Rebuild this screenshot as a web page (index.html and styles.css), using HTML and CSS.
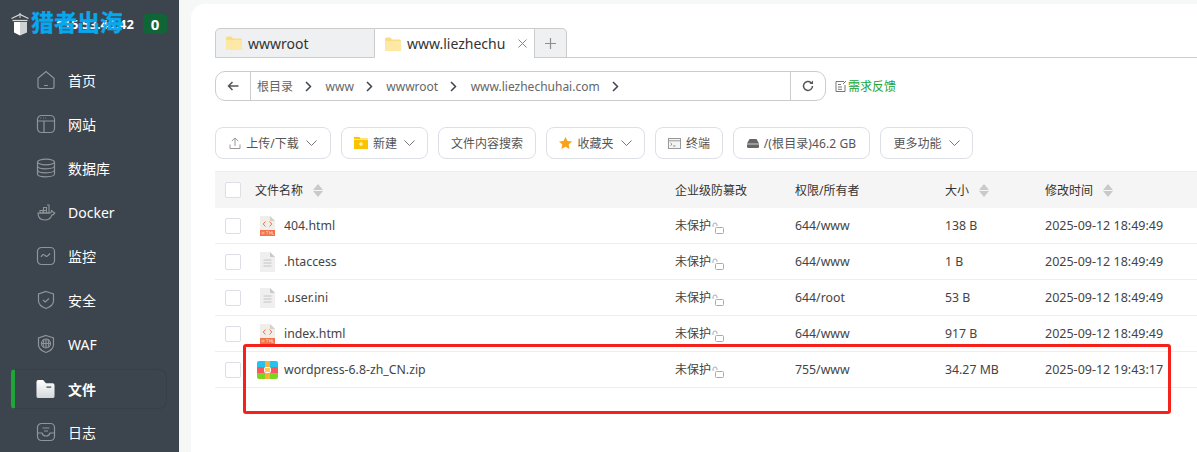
FILE: index.html
```html
<!DOCTYPE html>
<html>
<head lang="zh-CN">
    <meta charset="UTF-8">
    <title>文件管理</title>
    <link rel="stylesheet" href="styles.css">
</head>
<body>
<div class="page">
    <!-- 左侧菜单 -->
    <div class="side">
        <div class="brand">
            <span class="ip">115.53.46.42</span>
            <span class="badge">0</span>
            <span class="mark">
                <svg width="18" height="23" viewBox="0 0 18 23"><path d="M.5 5.500 9 1.500l8.500 4" fill="none" stroke="#d8d8d8" stroke-width="1.300"/><path d="M1.500 7.500h15" stroke="#d8d8d8" stroke-width="1.300"/><path d="M9 0v5" stroke="#d8d8d8"/><path d="M3 9h6v13.500L3 19.500z" fill="#fff"/><path d="M9 9h7v10.500l-7 3z" fill="#cfd2d4"/></svg>
                <span class="mark-text">猎者出海</span>
            </span>
        </div>
        <div class="menu">
            <div class="menu-item"><svg class="ico" viewBox="0 0 20 20"><path d="M2 8.200 10 1.500l8 6.700v8.300a2 2 0 0 1-2 2H4a2 2 0 0 1-2-2zM8 15.500h4"/></svg>首页</div>
            <div class="menu-item"><svg class="ico" viewBox="0 0 20 20"><rect x="1.500" y="1.500" width="17" height="17" rx="4"/><path d="M1.500 7h17M8 7v11.500M4.500 4.200h.6M7 4.200h.6M9.500 4.200h.6"/></svg>网站</div>
            <div class="menu-item"><svg class="ico" viewBox="0 0 20 20"><ellipse cx="10" cy="4" rx="8.500" ry="2.800"/><path d="M1.500 4v12c0 1.600 3.800 2.800 8.500 2.800s8.500-1.200 8.500-2.800V4M1.500 8c0 1.600 3.800 2.800 8.500 2.800s8.500-1.200 8.500-2.800M1.500 12c0 1.600 3.800 2.800 8.500 2.800s8.500-1.200 8.500-2.800"/></svg>数据库</div>
            <div class="menu-item"><svg class="ico" viewBox="0 0 20 20"><path d="M1.500 11h12.500c1 0 1.500-2 1.500-2.500 1 .2 1.500 1 1.800 2 .5 0 1 0 1.500.3-.8 2-2 2.200-3 2.300-1 3-3.500 4.900-7 4.900-4.300 0-6.800-2.500-6.800-7z"/><path d="M4 8.500h3v2.500H4zM7.500 8.500h3v2.500h-3zM7.500 5.500h3v3h-3zM11 3h2v8h-2" stroke-width="1.100"/></svg>Docker</div>
            <div class="menu-item"><svg class="ico" viewBox="0 0 20 20"><rect x="1.500" y="1.500" width="17" height="17" rx="4"/><path d="M5 11c1.500-3 2.500-3 4-1.500s2.500 1 5-2"/></svg>监控</div>
            <div class="menu-item"><svg class="ico" viewBox="0 0 20 20"><path d="M10 1.500 17.500 4v7c0 3.500-3.500 6-7.500 7.500C6 17 2.500 14.500 2.500 11V4z"/><path d="M7 10l2.200 2L13 8.500"/></svg>安全</div>
            <div class="menu-item"><svg class="ico" viewBox="0 0 20 20"><path d="M10 1.500 17.500 4v7c0 3.500-3.500 6-7.500 7.500C6 17 2.500 14.500 2.500 11V4z"/><circle cx="10" cy="9.500" r="4.500"/><path d="M5.500 9.500h9M10 5v9M8 5.500c-1 2.500-1 5.500 0 8M12 5.500c1 2.500 1 5.500 0 8"/></svg>WAF</div>
            <div class="menu-item active"><svg class="ico-solid" width="19" height="19" viewBox="0 0 20 20"><defs><linearGradient id="fold" x1="0" y1="0" x2="0" y2="1"><stop offset="0" stop-color="#fff"/><stop offset="1" stop-color="#d5d7d9"/></linearGradient></defs><path d="M2.500 0h5l3 3.500h7a2 2 0 0 1 2 2V17a2 2 0 0 1-2 2h-15a2 2 0 0 1-2-2V2a2 2 0 0 1 2-2z" fill="url(#fold)"/><path d="M11 7.500h5" stroke="#555b62" stroke-width="1.500"/></svg>文件</div>
            <div class="menu-item"><svg class="ico" viewBox="0 0 20 20"><rect x="1.500" y="1.500" width="17" height="17" rx="4"/><path d="M1.500 11H6c.5 2 2 3 4 3s3.500-1 4-3h4.500M6.500 6h7M8 9h4"/></svg>日志</div>
        </div>
    </div>
    <!-- 右侧内容 -->
    <div class="main">
        <div class="panel">
            <div class="tabs">
                <div class="tab">
                    <svg class="folder" viewBox="0 0 16 14"><path d="M0 2a1.500 1.500 0 0 1 1.500-1.500h4L7 2.500h7.500A1.500 1.500 0 0 1 16 4v8.500a1.500 1.500 0 0 1-1.500 1.500h-13A1.500 1.500 0 0 1 0 12.500z" fill="#fbdc84"/><path d="M0 4h16v8.500a1.500 1.500 0 0 1-1.500 1.500h-13A1.500 1.500 0 0 1 0 12.500z" fill="#fee8a6"/></svg>
                    wwwroot
                </div>
                <div class="tab on">
                    <svg class="folder" viewBox="0 0 16 14"><path d="M0 2a1.500 1.500 0 0 1 1.500-1.500h4L7 2.500h7.500A1.500 1.500 0 0 1 16 4v8.500a1.500 1.500 0 0 1-1.500 1.500h-13A1.500 1.500 0 0 1 0 12.500z" fill="#fbdc84"/><path d="M0 4h16v8.500a1.500 1.500 0 0 1-1.500 1.500h-13A1.500 1.500 0 0 1 0 12.500z" fill="#fee8a6"/></svg>
                    <span class="tab-name">www.liezhechu</span>
                    <svg class="tab-x" width="9" height="9" viewBox="0 0 9 9"><path d="M.5.500l8 8M8.500.500l-8 8" stroke="#888" fill="none"/></svg>
                </div>
                <div class="tab-add"><svg width="13" height="13" viewBox="0 0 13 13"><path d="M6.500 1v11M1 6.500h11" stroke="#8a8f94" stroke-width="1.200"/></svg></div>
                <div class="tab-rest"></div>
            </div>
            <div class="path-row">
                <div class="path">
                    <div class="path-back"><svg width="12" height="10" viewBox="0 0 12 10"><path d="M11.500 5H1.500M5.500 1 1.500 5l4 4" fill="none" stroke="#555" stroke-width="1.500"/></svg></div>
                    <div class="crumbs">
                        <span>根目录</span><svg class="sep" viewBox="0 0 7 11"><path d="M1 1l4.500 4.500L1 10"/></svg>
                        <span>www</span><svg class="sep" viewBox="0 0 7 11"><path d="M1 1l4.500 4.500L1 10"/></svg>
                        <span>wwwroot</span><svg class="sep" viewBox="0 0 7 11"><path d="M1 1l4.500 4.500L1 10"/></svg>
                        <span>www.liezhechuhai.com</span><svg class="sep" viewBox="0 0 7 11"><path d="M1 1l4.500 4.500L1 10"/></svg>
                    </div>
                    <div class="path-refresh"><svg width="12" height="12" viewBox="0 0 12 12"><path d="M10.500 6A4.500 4.500 0 1 1 9 2.600" fill="none" stroke="#555" stroke-width="1.500"/><path d="M11 .500v3.500H7.500z" fill="#555"/></svg></div>
                </div>
                <div class="feedback"><svg width="12" height="12" viewBox="0 0 12 12"><path d="M9 1.500H1v10h9V5M3 4.500h3M3 7h4M3 9.300h4M8 4l3-3" fill="none" stroke="#777"/></svg>需求反馈</div>
            </div>
            <div class="tools">
                <div class="btn b-upload"><svg width="12" height="12" viewBox="0 0 12 12"><path d="M1 7.500v4h10v-4M6 9V1M2.800 4 6 1l3.200 3" fill="none" stroke="#999"/></svg>上传/下载<svg class="arr" viewBox="0 0 11 6"><path d="M.5.500 5.500 5.500 10.500.500"/></svg></div>
                <div class="btn b-new"><svg width="14" height="12" viewBox="0 0 14 12"><path d="M0 0h5.500l1 1.500H14V12H0z" fill="#fcc400"/><path d="M0 2.500h14" stroke="#fff" stroke-width=".6"/><path d="M7 5v4M5 7h4" stroke="#fff"/></svg>新建<svg class="arr" viewBox="0 0 11 6"><path d="M.5.500 5.500 5.500 10.500.500"/></svg></div>
                <div class="btn b-search">文件内容搜索</div>
                <div class="btn b-fav"><svg width="13" height="12" viewBox="0 0 13 12"><path d="M6.500 0l2 4 4.500.5L9.700 7.600l.9 4.400-4.100-2.200L2.400 12l.9-4.400L0 4.500 4.500 4z" fill="#f8a21c"/></svg>收藏夹<svg class="arr" viewBox="0 0 11 6"><path d="M.5.500 5.500 5.500 10.500.500"/></svg></div>
                <div class="btn b-term"><svg width="13" height="11" viewBox="0 0 13 11"><rect x=".5" y=".5" width="12" height="10" fill="#f4f4f4" stroke="#999"/><path d="M.5 2.800h12" stroke="#999"/><path d="M2.500 5l1.500 1.300L2.500 7.500M5 8h2.500" stroke="#777" fill="none" stroke-width=".8"/></svg>终端</div>
                <div class="btn b-disk"><svg width="12" height="9" viewBox="0 0 12 9"><path d="M2.500 0h7L12 4.500V7.500a1.500 1.500 0 0 1-1.500 1.500h-9A1.500 1.500 0 0 1 0 7.500V4.500z" fill="#666"/><path d="M0 5h12" stroke="#fff" stroke-width=".7"/></svg>/(根目录)46.2 GB</div>
                <div class="btn b-more">更多功能<svg class="arr" viewBox="0 0 11 6"><path d="M.5.500 5.500 5.500 10.500.500"/></svg></div>
            </div>
            <div class="table">
                <div class="row head">
                    <div class="c-check"><span class="box"></span></div>
                    <div class="c-name">文件名称<span class="sort"></span></div>
                    <div class="c-prot">企业级防篡改</div>
                    <div class="c-perm">权限/所有者</div>
                    <div class="c-size">大小<span class="sort"></span></div>
                    <div class="c-time">修改时间<span class="sort"></span></div>
                </div>
                <div class="row">
                    <div class="c-check"><span class="box"></span></div>
                    <div class="c-name">
                        <svg class="file" viewBox="0 0 15 20"><path d="M0 0h10l5 5v15H0z" fill="#f1eee9"/><path d="M10 0l5 5h-5z" fill="#d5d0c9"/><path d="M0 14h15v6H0z" fill="#f0734a"/><path d="M5.500 5.500 3.200 8l2.300 2.500M9.500 5.500 11.800 8l-2.300 2.500" fill="none" stroke="#f0734a"/><path d="M2 15.500v3M2 17h2M4 15.500v3M6 15.500h2.500M7.200 15.500v3M9.500 18.500v-3l1 2 1-2v3M12.500 15.500v3h1.500" stroke="#fde3d8" stroke-width=".5" fill="none"/></svg>
                        <span class="fname">404.html</span>
                    </div>
                    <div class="c-prot"><span class="fname">未保护</span><svg class="lock" viewBox="0 0 12 12"><path d="M1 5V3a2 2 0 0 1 4 0v1"/><rect x="3.500" y="5.500" width="8" height="6" rx="1"/></svg></div>
                    <div class="c-perm">644/www</div>
                    <div class="c-size">138 B</div>
                    <div class="c-time">2025-09-12 18:49:49</div>
                </div>
                <div class="row">
                    <div class="c-check"><span class="box"></span></div>
                    <div class="c-name">
                        <svg class="file" viewBox="0 0 15 20"><path d="M0 0h10l5 5v15H0z" fill="#efefef"/><path d="M10 0l5 5h-5z" fill="#c9c9c9"/><path d="M3.500 8h8M3.500 11h8M3.500 14h8" stroke="#c4c4c4"/></svg>
                        <span class="fname">.htaccess</span>
                    </div>
                    <div class="c-prot"><span class="fname">未保护</span><svg class="lock" viewBox="0 0 12 12"><path d="M1 5V3a2 2 0 0 1 4 0v1"/><rect x="3.500" y="5.500" width="8" height="6" rx="1"/></svg></div>
                    <div class="c-perm">644/www</div>
                    <div class="c-size">1 B</div>
                    <div class="c-time">2025-09-12 18:49:49</div>
                </div>
                <div class="row">
                    <div class="c-check"><span class="box"></span></div>
                    <div class="c-name">
                        <svg class="file" viewBox="0 0 15 20"><path d="M0 0h10l5 5v15H0z" fill="#efefef"/><path d="M10 0l5 5h-5z" fill="#c9c9c9"/><path d="M3.500 8h8M3.500 11h8M3.500 14h8" stroke="#c4c4c4"/></svg>
                        <span class="fname">.user.ini</span>
                    </div>
                    <div class="c-prot"><span class="fname">未保护</span><svg class="lock" viewBox="0 0 12 12"><path d="M1 5V3a2 2 0 0 1 4 0v1"/><rect x="3.500" y="5.500" width="8" height="6" rx="1"/></svg></div>
                    <div class="c-perm">644/root</div>
                    <div class="c-size">53 B</div>
                    <div class="c-time">2025-09-12 18:49:49</div>
                </div>
                <div class="row">
                    <div class="c-check"><span class="box"></span></div>
                    <div class="c-name">
                        <svg class="file" viewBox="0 0 15 20"><path d="M0 0h10l5 5v15H0z" fill="#f1eee9"/><path d="M10 0l5 5h-5z" fill="#d5d0c9"/><path d="M0 14h15v6H0z" fill="#f0734a"/><path d="M5.500 5.500 3.200 8l2.300 2.500M9.500 5.500 11.800 8l-2.300 2.500" fill="none" stroke="#f0734a"/><path d="M2 15.500v3M2 17h2M4 15.500v3M6 15.500h2.500M7.200 15.500v3M9.500 18.500v-3l1 2 1-2v3M12.500 15.500v3h1.500" stroke="#fde3d8" stroke-width=".5" fill="none"/></svg>
                        <span class="fname">index.html</span>
                    </div>
                    <div class="c-prot"><span class="fname">未保护</span><svg class="lock" viewBox="0 0 12 12"><path d="M1 5V3a2 2 0 0 1 4 0v1"/><rect x="3.500" y="5.500" width="8" height="6" rx="1"/></svg></div>
                    <div class="c-perm">644/www</div>
                    <div class="c-size">917 B</div>
                    <div class="c-time">2025-09-12 18:49:49</div>
                </div>
                <div class="row">
                    <div class="c-check"><span class="box"></span></div>
                    <div class="c-name">
                        <svg class="zip" width="21" height="18" viewBox="0 0 21 18"><path d="M2 0h17a2 2 0 0 1 2 2v4H0V2a2 2 0 0 1 2-2z" fill="#22c4ef"/><path d="M0 6h21v6H0z" fill="#f9565f"/><path d="M0 12h21v4a2 2 0 0 1-2 2H2a2 2 0 0 1-2-2z" fill="#7ed321"/><path d="M8 0h5v18H8z" fill="#fbb03b"/><rect x="7.500" y="6.500" width="6" height="5" rx="1" fill="#fbd14b" stroke="#fff"/></svg>
                        <span class="fname">wordpress-6.8-zh_CN.zip</span>
                    </div>
                    <div class="c-prot"><span class="fname">未保护</span><svg class="lock" viewBox="0 0 12 12"><path d="M1 5V3a2 2 0 0 1 4 0v1"/><rect x="3.500" y="5.500" width="8" height="6" rx="1"/></svg></div>
                    <div class="c-perm">755/www</div>
                    <div class="c-size">34.27 MB</div>
                    <div class="c-time">2025-09-12 19:43:17</div>
                </div>
            </div>
        </div>
    </div>
    <!-- 红框标注 -->
    <div class="mark-box"></div>
</div>
</body>
</html>
```

FILE: styles.css
```css
*{ margin:0; padding:0; box-sizing:border-box; }
html,body{ height:100%; overflow:hidden; }
body{ font-family:"Noto Sans","Noto Sans CJK SC",sans-serif; font-size:12px; color:#444; background:#f6f8f8; }
.page{ display:flex; height:452px; width:1197px; position:relative; overflow:hidden; }

/* side */
.side{ width:179px; flex:none; background:#3c444d; color:#fff; }
.brand{ height:48px; position:relative; display:flex; justify-content:flex-end; align-items:center; padding:0 12px 0 0; gap:9px; }
.ip{ font-weight:700; font-size:13px; color:#fff; }
.badge{ width:24px; height:20px; border-radius:4px; background:#106537; color:#fff; font-weight:700; font-size:15px; line-height:20px; text-align:center; margin-top:-1px; }
.mark{ position:absolute; left:11px; top:11px; display:flex; align-items:flex-start; gap:2px; }
.mark svg{ margin-top:2px; }
.mark-text{ font-size:23px; font-weight:700; line-height:23px; color:#07a8ee; -webkit-text-stroke:.4px #07a8ee; white-space:nowrap; }
.menu{ padding-top:10px; display:flex; flex-direction:column; }
.menu-item{ height:44px; margin-left:11px; width:156px; padding-left:25px; display:flex; align-items:center; gap:12px; font-size:14px; color:#fff; border-radius:0 8px 8px 0; }
.ico{ width:20px; height:20px; flex:none; fill:none; stroke:#8f9499; stroke-width:1.200; }
.ico-solid{ flex:none; }
.menu-item.active{ height:40px; margin:3px 0 1px 11px; border:1px solid #383f47; border-left:4px solid #20a53a; border-radius:4px 8px 8px 4px; padding-left:21px; gap:13px; font-weight:700; }

/* main */
.main{ flex:1; padding:4px 0 0 12px; }
.panel{ background:#fff; height:100%; border-radius:14px 0 0 0; padding:24px 0 0 24px; }
.tabs{ display:flex; height:30px; }
.tab{ width:160px; border:1px solid #ccc; border-radius:5px 0 0 0; background:#eff0f2; display:flex; align-items:center; padding-left:10px; font-size:14px; color:#333; gap:6px; }
.tab.on{ background:#fff; border-left:none; border-bottom:none; border-radius:0; padding-left:10px; }
.tab-name{ width:105px; overflow:visible; white-space:nowrap; }
.tab-add{ width:32px; border:1px solid #ccc; border-left:none; border-radius:0 5px 0 0; background:#eff0f2; display:flex; align-items:center; justify-content:center; }
.tab-rest{ flex:1; border-bottom:1px solid #ccc; }
.folder{ width:16px; height:14px; flex:none; }
.path-row{ display:flex; align-items:center; margin-top:13px; height:30px; }
.path{ width:611px; height:30px; border:1px solid #ccc; border-radius:10px; display:flex; background:#fff; }
.path-back{ width:35px; flex:none; border-right:1px solid #ccc; display:flex; align-items:center; justify-content:center; }
.crumbs{ flex:1; display:flex; align-items:center; padding-left:6px; font-size:12px; color:#666; }
.sep{ width:7px; height:11px; margin:0 13.500px 0 12px; fill:none; stroke:#3f4650; stroke-width:1.500; }
.path-refresh{ width:35px; flex:none; border-left:1px solid #ccc; display:flex; align-items:center; justify-content:center; }
.feedback{ margin-left:9px; display:flex; align-items:center; gap:1px; font-size:12px; color:#20a53a; }
.tools{ display:flex; gap:10px; margin-top:26px; height:32px; }
.btn{ display:flex; align-items:center; justify-content:center; height:32px; border:1px solid #dcdfe6; border-radius:8px; font-size:12px; color:#555; gap:5px; background:#fff; }
.b-upload{ width:116px; }
.b-new{ width:87px; }
.b-search{ width:98px; }
.b-fav{ width:99px; }
.b-term{ width:68px; }
.b-disk{ width:137px; letter-spacing:.1px; }
.b-more{ width:93px; }
.arr{ width:11px; height:6px; margin-left:2px; fill:none; stroke:#777; stroke-width:1; }
.table{ margin-top:12px; border-top:1px solid #eee; }
.row{ display:flex; height:36px; align-items:center; border-bottom:1px solid #eee; color:#444; font-size:12.300px; }
.row.head{ background:#f5f5f5; border-bottom:none; height:36px; color:#333; font-size:12px; }
.c-check{ width:40px; padding-left:10px; flex:none; display:flex; }
.box{ width:16px; height:16px; border:1px solid #dcdfe6; border-radius:2px; background:#fff; }
.c-name{ width:420px; flex:none; display:flex; align-items:center; }
.fname{ margin-top:-1px; }
.c-prot{ width:120px; flex:none; display:flex; align-items:center; font-size:12px; }
.c-perm{ width:150px; flex:none; }
.c-size{ width:100px; flex:none; display:flex; align-items:center; }
.c-time{ flex:1; display:flex; align-items:center; font-size:12.500px; }
.head .c-time{ font-size:12px; }
.file{ width:15px; height:20px; margin:0 9px 0 5px; flex:none; }
.zip{ margin:0 6px 0 2px; flex:none; }
.lock{ width:12px; height:12px; margin:4px 0 0 1px; fill:none; stroke:#aaa; }
.sort{ display:inline-flex; flex-direction:column; gap:1px; margin-left:10px; }
.sort:before,.sort:after{ content:""; width:0; height:0; border-left:5px solid transparent; border-right:5px solid transparent; }
.sort:before{ border-bottom:6px solid #c8c9cc; }
.sort:after{ border-top:6px solid #c8c9cc; }
.mark-box{ position:absolute; left:243px; top:344px; width:928px; height:70px; border:3px solid #f5221b; border-radius:3px; }
```
